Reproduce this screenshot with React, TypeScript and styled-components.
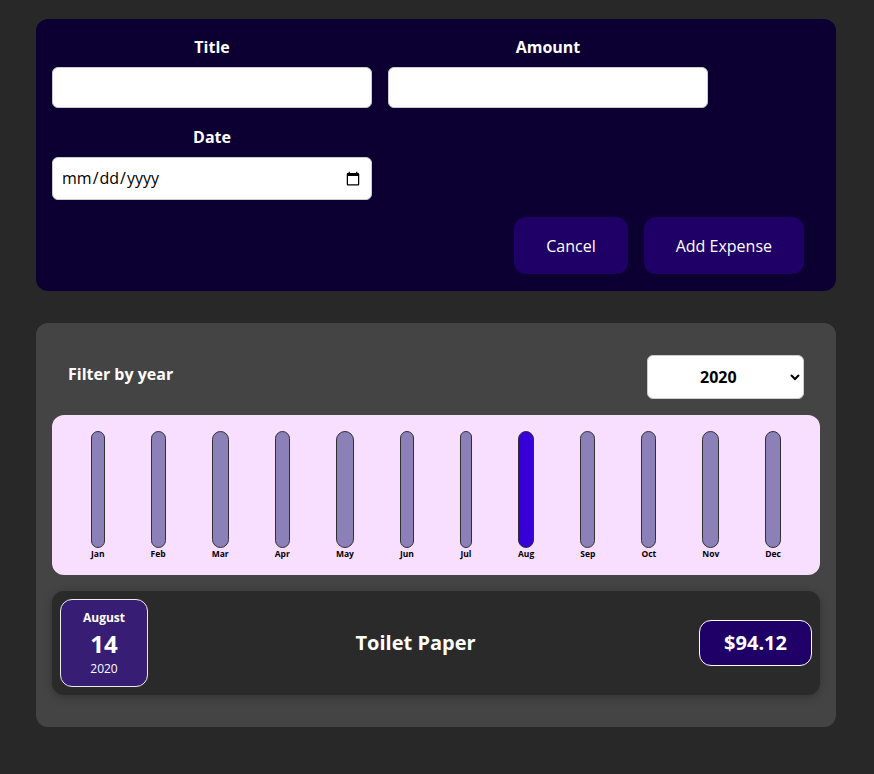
import React from "react";
import styled, { createGlobalStyle } from "styled-components";

const GlobalStyle = createGlobalStyle`
  * { box-sizing: border-box; }
  html, body { margin: 0; padding: 0; }
  body {
    background: #282828;
    font-family: "Open Sans", "Noto Sans", "Liberation Sans", sans-serif;
    font-size: 16px;
    line-height: 1.5;
  }
`;

const Page = styled.div`
  padding: 19px 38px 40px 36px;
  display: flex;
  flex-direction: column;
  gap: 32px;
`;

const FormCard = styled.div`
  width: 800px;
  background: #0c0033;
  border-radius: 12px;
  padding: 16px 16px 17px;
  color: #fff;
`;

const Controls = styled.div`
  display: flex;
  flex-wrap: wrap;
  column-gap: 16px;
  row-gap: 17px;
  margin-bottom: 17px;
  width: 656px;
`;

const Control = styled.div`
  width: 320px;
  text-align: center;
`;

const Label = styled.label`
  display: block;
  font-weight: 700;
  margin-bottom: 8px;
  line-height: 24px;
`;

const Input = styled.input<{ $tall?: boolean }>`
  font: inherit;
  line-height: 23px;
  height: ${(p) => (p.$tall ? "43px" : "41px")};
  padding: 8px;
  border-radius: 6px;
  border: 1px solid #ccc;
  width: 320px;
  background: #fff;
  color: #000;
`;

const Actions = styled.div`
  display: flex;
  justify-content: flex-end;
  gap: 16px;
  padding-right: 16px;
`;

const Button = styled.button`
  font: inherit;
  font-size: 16px;
  line-height: 24px;
  padding: 16px 32px;
  height: 57px;
  border: none;
  border-radius: 12px;
  background: #1f0066;
  color: #fff;
  cursor: pointer;
`;

const ListCard = styled.div`
  width: 800px;
  background: #444;
  border-radius: 12px;
  padding: 16px;
`;

const Filter = styled.div`
  display: flex;
  align-items: center;
  justify-content: space-between;
  padding: 0 16px;
  margin: 16px 0;
  color: #fff;
`;

const FilterLabel = styled.label`
  font-weight: 700;
  line-height: 24px;
  margin-bottom: 6px;
`;

const Select = styled.select`
  font: inherit;
  font-weight: 700;
  padding: 8px 48px;
  height: 44px;
  width: 157px;
  border-radius: 6px;
  border: 1px solid #ccc;
  background: #fff;
  color: #000;
`;

const Chart = styled.div`
  height: 160px;
  padding: 16px;
  background: #f8dfff;
  border-radius: 12px;
  display: flex;
  justify-content: space-around;
`;

const BarCol = styled.div`
  height: 100%;
  display: flex;
  flex-direction: column;
  align-items: center;
`;

const BarInner = styled.div<{ $active?: boolean }>`
  flex: 1;
  width: 100%;
  min-width: 12px;
  border: 1px solid #313131;
  border-radius: 12px;
  background: ${(p) => (p.$active ? "#3700d8" : "#8c80b8")};
`;

const BarLabel = styled.div`
  font-weight: 700;
  font-size: 8.5px;
  line-height: 11px;
  text-align: center;
  color: #000;
`;

const Item = styled.div`
  display: flex;
  align-items: center;
  padding: 8px;
  margin: 16px 0;
  border-radius: 12px;
  background: #2a2a2a;
  box-shadow: 0 2px 8px rgba(0, 0, 0, 0.25);
`;

const DateBox = styled.div`
  width: 88px;
  height: 88px;
  display: flex;
  flex-direction: column;
  align-items: center;
  justify-content: center;
  border: 1px solid #ececec;
  border-radius: 12px;
  background: #371e74;
  color: #fff;
`;

const DateMonth = styled.div`
  font-size: 12px;
  font-weight: 700;
  line-height: 18px;
`;

const DateDay = styled.div`
  font-size: 24px;
  font-weight: 700;
  line-height: 33px;
`;

const DateYear = styled.div`
  font-size: 12px;
  line-height: 18px;
`;

const Description = styled.div`
  flex: 1;
  display: flex;
  align-items: center;
`;

const Title = styled.h2`
  flex: 1;
  margin: 0 16px 0 0;
  text-align: center;
  font-size: 20px;
  font-weight: 700;
  color: #fff;
`;

const Price = styled.div`
  font-size: 20px;
  font-weight: 700;
  line-height: 28px;
  color: #fff;
  background: #1f0066;
  border: 1px solid #fff;
  padding: 8px 24px;
  border-radius: 12px;
`;

const months = ["Jan", "Feb", "Mar", "Apr", "May", "Jun", "Jul", "Aug", "Sep", "Oct", "Nov", "Dec"];

export default function App() {
  return (
    <>
      <GlobalStyle />
      <Page>
        <FormCard>
          <form onSubmit={(e) => e.preventDefault()}>
            <Controls>
              <Control>
                <Label>Title</Label>
                <Input type="text" />
              </Control>
              <Control>
                <Label>Amount</Label>
                <Input type="number" />
              </Control>
              <Control>
                <Label>Date</Label>
                <Input type="date" $tall />
              </Control>
            </Controls>
            <Actions>
              <Button type="button">Cancel</Button>
              <Button type="submit">Add Expense</Button>
            </Actions>
          </form>
        </FormCard>
        <ListCard>
          <Filter>
            <FilterLabel>Filter by year</FilterLabel>
            <Select defaultValue="2020">
              <option value="2022">2022</option>
              <option value="2021">2021</option>
              <option value="2020">2020</option>
              <option value="2019">2019</option>
            </Select>
          </Filter>
          <Chart>
            {months.map((m) => (
              <BarCol key={m}>
                <BarInner $active={m === "Aug"} />
                <BarLabel>{m}</BarLabel>
              </BarCol>
            ))}
          </Chart>
          <Item>
            <DateBox>
              <DateMonth>August</DateMonth>
              <DateDay>14</DateDay>
              <DateYear>2020</DateYear>
            </DateBox>
            <Description>
              <Title>Toilet Paper</Title>
              <Price>$94.12</Price>
            </Description>
          </Item>
        </ListCard>
      </Page>
    </>
  );
}
